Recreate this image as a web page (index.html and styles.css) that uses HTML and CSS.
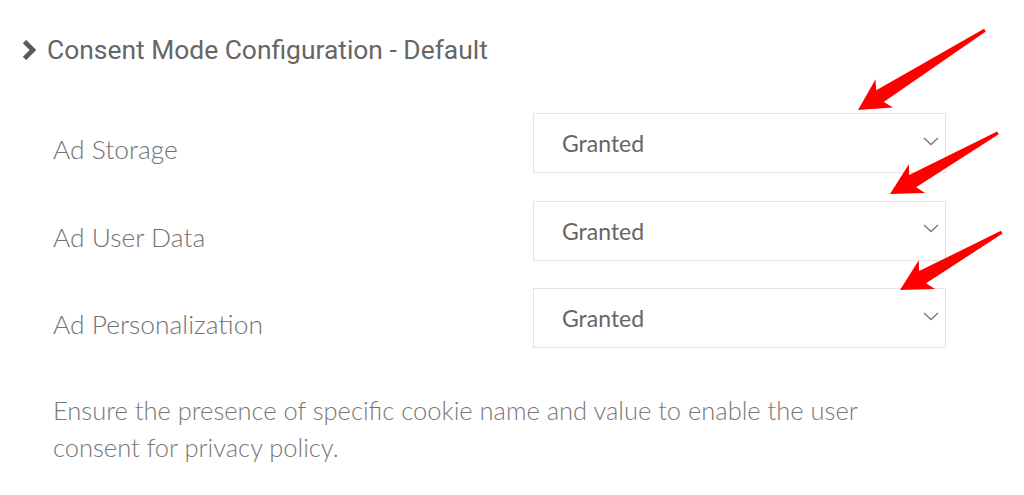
FILE: index.html
```html
<!DOCTYPE html>
<html lang="en">
<head>
<meta charset="UTF-8">
<meta name="viewport" content="width=device-width, initial-scale=1.0">
<title>Consent Mode Configuration</title>
<link rel="stylesheet" href="styles.css">
</head>
<body>
    <div class="panel">
        <!-- 섹션 제목 -->
        <h2 class="section-title">
            <svg class="caret" width="15" height="20" viewBox="0 0 15 20"><path d="M2.5 1.5 L11 10 L2.5 18.5" fill="none" stroke="#5a5a5a" stroke-width="4.6" stroke-linejoin="miter"/></svg>
            <span>Consent Mode Configuration - Default</span>
        </h2>

        <div class="fields">
            <div class="field">
                <span class="field-label">Ad Storage</span>
                <div class="select-box">
                    <span>Granted</span>
                    <svg class="select-caret" width="16" height="9" viewBox="0 0 16 9"><path d="M1 1 L8 7.5 L15 1" fill="none" stroke="#7a7a7a" stroke-width="1.4"/></svg>
                </div>
            </div>
            <div class="field">
                <span class="field-label">Ad User Data</span>
                <div class="select-box">
                    <span>Granted</span>
                    <svg class="select-caret" width="16" height="9" viewBox="0 0 16 9"><path d="M1 1 L8 7.5 L15 1" fill="none" stroke="#7a7a7a" stroke-width="1.4"/></svg>
                </div>
            </div>
            <div class="field">
                <span class="field-label">Ad Personalization</span>
                <div class="select-box">
                    <span>Granted</span>
                    <svg class="select-caret" width="16" height="9" viewBox="0 0 16 9"><path d="M1 1 L8 7.5 L15 1" fill="none" stroke="#7a7a7a" stroke-width="1.4"/></svg>
                </div>
            </div>
        </div>

        <p class="hint">Ensure the presence of specific cookie name and value to enable the user consent for privacy policy.</p>
    </div>

    <!-- 빨간 화살표 (위에 겹침) -->
    <svg class="arrows" width="1024" height="495" viewBox="0 0 1024 495">
        <g transform="translate(858 110) rotate(-32.2)">
            <polygon points="0,0 31,-16.5 26,-7 150,-1.6 150,1.6 26,7 31,16.5" fill="#fe0000"/>
        </g>
        <g transform="translate(890 194) rotate(-29.5)">
            <polygon points="0,0 31,-16.5 26,-7 124,-1.6 124,1.6 26,7 31,16.5" fill="#fe0000"/>
        </g>
        <g transform="translate(900 290) rotate(-29.6)">
            <polygon points="0,0 31,-16.5 26,-7 117,-1.6 117,1.6 26,7 31,16.5" fill="#fe0000"/>
        </g>
    </svg>
</body>
</html>
```
FILE: styles.css
```css
body {
    margin: 0;
    background: #fff;
    font-family: Lato, "Liberation Sans", sans-serif;
    color: #6a6a6a;
}
.panel {
    padding: 32px 60px 0 22px;
}

/* 제목 */
.section-title {
    display: flex;
    align-items: center;
    gap: 10px;
    margin: 0;
    font-family: Roboto, "Liberation Sans", sans-serif;
    font-weight: 400;
    font-size: 26.4px;
    line-height: 36px;
    color: #666;
}

/* 입력 항목 */
.fields {
    display: flex;
    flex-direction: column;
    gap: 27.5px;
    margin-top: 45px;
    padding-left: 31px;
}
.field {
    display: grid;
    grid-template-columns: 480px 413px;
    align-items: center;
}
.field-label {
    padding-top: 12px;
    font-size: 26.4px;
    font-weight: 300;
    color: #727272;
}
.select-box {
    display: flex;
    align-items: center;
    justify-content: space-between;
    box-sizing: border-box;
    height: 60px;
    padding: 0 6px 0 28px;
    border: 1px solid #e3e3e3;
    font-size: 23px;
    color: #666;
}
.select-caret {
    margin-bottom: 4px;
}

/* 안내 문구 */
.hint {
    max-width: 830px;
    margin: 44px 0 0 31px;
    font-size: 25.5px;
    font-weight: 300;
    line-height: 37px;
    color: #777;
}

.arrows {
    position: absolute;
    left: 0;
    top: 0;
    pointer-events: none;
}
```
